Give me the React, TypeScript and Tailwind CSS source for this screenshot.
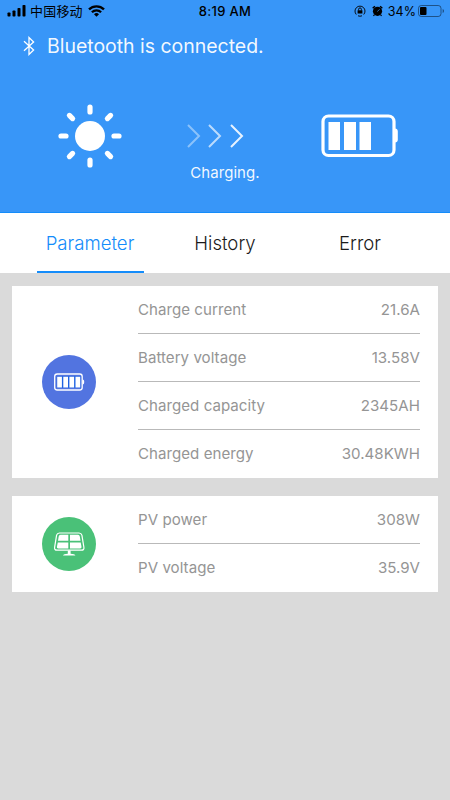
import React from "react";

type Row = { label: string; value: string };

const battery: Row[] = [
  { label: "Charge current", value: "21.6A" },
  { label: "Battery voltage", value: "13.58V" },
  { label: "Charged capacity", value: "2345AH" },
  { label: "Charged energy", value: "30.48KWH" },
];

const solar: Row[] = [
  { label: "PV power", value: "308W" },
  { label: "PV voltage", value: "35.9V" },
];

function StatusBar() {
  return (
    <div className="grid h-[22px] grid-cols-3 items-center pl-[7px] pr-[5px] text-black">
      <div className="flex items-center">
        <svg width="19" height="12" viewBox="0 0 19 12" fill="currentColor">
          <rect x="0.5" y="7.5" width="3" height="4" rx="0.8" />
          <rect x="5.5" y="5.5" width="3" height="6" rx="0.8" />
          <rect x="10.5" y="3" width="3" height="8.5" rx="0.8" />
          <rect x="15.5" y="0" width="3" height="11.5" rx="0.8" />
        </svg>
        <span className="ml-[4px] whitespace-nowrap font-['Noto_Sans_CJK_SC',sans-serif] text-[13px] font-normal leading-[20px] tracking-[0.2px]">中国移动</span>
        <svg className="ml-[5px]" width="17" height="12" viewBox="0 0 17 12" fill="none" stroke="currentColor" strokeWidth="2.3">
          <path d="M1 4.4a10.6 10.6 0 0 1 15 0" />
          <path d="M3.9 7.2a6.6 6.6 0 0 1 9.2 0" />
          <path d="M8.5 11.8 6 9.2a3.6 3.6 0 0 1 5 0z" fill="currentColor" stroke="none" />
        </svg>
      </div>
      <div className="pr-[2px] text-center text-[13px] font-medium leading-[20px] tracking-[0.3px]">8:19 AM</div>
      <div className="flex items-center justify-end">
        <svg width="12" height="12" viewBox="0 0 12 12" fill="none" stroke="currentColor">
          <path d="M2.3 9.5A5 5 0 1 1 9.7 9.5M4 10.8a5 5 0 0 0 4 0" strokeWidth=".9" />
          <rect x="3.6" y="5.3" width="4.8" height="3.2" fill="currentColor" stroke="none" />
          <path d="M4.6 5.5V4.3a1.4 1.4 0 0 1 2.8 0v1.2" strokeWidth=".9" />
        </svg>
        <svg className="ml-[6px]" width="11" height="12" viewBox="0 0 11 12">
          <circle cx="5.5" cy="6.3" r="4.6" />
          <path d="M.7 3.3 2.9 1.2M10.3 3.3 8.1 1.2" stroke="#000" strokeWidth="1.5" />
          <path d="M2.3 9.8 1.5 11M8.7 9.8l.8 1.2" stroke="#000" strokeWidth="1.2" />
          <path d="M5.3 6.5 7.7 4.3" stroke="#3896f8" strokeWidth=".7" />
        </svg>
        <span className="ml-[5px] pt-[1px] text-[12.5px] leading-[20px] tracking-[0.05px]">34%</span>
        <svg className="ml-[2px]" width="27" height="12" viewBox="0 0 27 12">
          <rect x=".5" y=".5" width="22.5" height="11" rx="2.8" fill="none" stroke="#000" strokeOpacity=".45" />
          <rect x="2" y="2" width="6.5" height="8" rx="1" />
          <path d="M24.7 4v4a2.2 2.2 0 0 0 0-4" fillOpacity=".5" />
        </svg>
      </div>
    </div>
  );
}

function Header() {
  return (
    <header className="flex h-[213px] flex-col border-b border-[#148cfa] bg-[#3896f8] text-white">
      <StatusBar />
      <div className="flex h-[48px] items-center pl-[23px]">
        <svg width="12" height="20" viewBox="0 0 12 20" fill="none" stroke="currentColor" strokeWidth="1.3">
          <path d="M1 5.3 10.6 14 6 18.4V1.6l4.6 4.4L1 14.7" />
        </svg>
        <h1 className="ml-[12px] text-[19.5px] font-normal leading-[24px] tracking-[-0.03px] text-white/95">Bluetooth is connected.</h1>
      </div>
      <div className="flex pl-[57px]">
        <svg className="mt-[33px]" width="66" height="66" viewBox="-33 -33 66 66">
          <circle r="15" fill="#fff" />
          <path
            d="M0-29v5M0 24v5M-29 0h5M24 0h5M-20.6-20.6l3.2 3.2M20.6-20.6l-3.2 3.2M-20.6 20.6l3.2-3.2M20.6 20.6l-3.2-3.2"
            stroke="#fff"
            strokeWidth="5.2"
            strokeLinecap="round"
          />
        </svg>
        <div className="ml-[62px] flex w-[80px] flex-col items-center">
          <svg className="mt-[54px] mr-[21px]" width="58" height="24" viewBox="0 0 58 24" fill="none" stroke="#fff" strokeWidth="2">
            <path d="M2 1l11 11L2 23" opacity=".42" />
            <path d="M23 1l11 11-11 11" opacity=".66" />
            <path d="M45 1l11 11-11 11" opacity=".88" />
          </svg>
          <p className="mt-[15px] text-[15px] font-normal leading-[20px] tracking-[0.05px] text-white/95">Charging.</p>
        </div>
        <svg className="ml-[55px] mt-[43px]" width="78" height="46" viewBox="0 0 78 46" fill="none">
          <rect x="3" y="3" width="71" height="39.5" rx="5.5" stroke="#fff" strokeWidth="3.2" />
          <path d="M8.5 9H20v28H8.500zM24 9h12v28H24zM39.500 9H51v28H39.500z" fill="#fff" />
          <path d="M75 15.500c1.800 0 2.800 1 2.800 3v8c0 2-1 3-2.800 3z" fill="#fff" />
        </svg>
      </div>
    </header>
  );
}

function Tabs() {
  return (
    <nav className="flex h-[60px] justify-center bg-white text-[18.6px] font-light leading-[24px] text-[#1b1b1b]">
      <div className="flex w-[135px] justify-center">
        <button className="flex w-[107px] justify-center border-b-2 border-[#148cfa] pt-[18px] text-[#148cfa]">Parameter</button>
      </div>
      <button className="flex w-[135px] justify-center pt-[18px]">History</button>
      <button className="flex w-[135px] justify-center pt-[18px]">Error</button>
    </nav>
  );
}

function Card({ rows, children }: { rows: Row[]; children: React.ReactNode }) {
  return (
    <section className="flex items-center bg-white pr-[18px]">
      <div className="flex w-[126px] justify-start pl-[30px]">{children}</div>
      <dl className="flex-1">
        {rows.map((r) => (
          <div
            key={r.label}
            className="flex h-[48px] items-center justify-between border-b border-[#b9b9b9] pt-[1.5px] text-[15.1px] font-normal leading-[20px] tracking-[0.03px] text-[#959595] last:border-transparent"
          >
            <dt>{r.label}</dt>
            <dd>{r.value}</dd>
          </div>
        ))}
      </dl>
    </section>
  );
}

function BatteryBadge() {
  return (
    <svg width="54" height="54" viewBox="0 0 54 54">
      <circle cx="27" cy="27" r="27" fill="#5274e0" />
      <rect x="12.7" y="19" width="27.5" height="16" rx="2.5" fill="none" stroke="#fff" strokeWidth="1.3" />
      <path d="M14.8 21.2h23.8v11.6H14.8z" fill="#1f63e2" />
      <path d="M15.2 21.7h4.7v10.8h-4.7zM21.3 21.7h4.7v10.8h-4.7zM27.4 21.7h4.7v10.8h-4.7zM33.5 21.7h4.7v10.8h-4.7z" fill="#fff" />
      <path d="M40.5 24.5c1.4 0 1.7 1 1.7 2.5s-.3 2.5-1.7 2.5z" fill="#fff" />
    </svg>
  );
}

function SolarBadge() {
  return (
    <svg width="54" height="54" viewBox="0 0 54 54">
      <circle cx="27" cy="27" r="27" fill="#4ac178" />
      <path d="M17.5 16H37q2.300 0 2.900 2.200l2 12.200q.4 2.800-2.400 2.800H15q-2.800 0-2.400-2.800l2-12.200q.6-2.200 2.900-2.200z" fill="none" stroke="#fff" strokeWidth="1.2" />
      <path d="M18.5 17.8h7.8v6H16l.7-4.300q.3-1.700 1.800-1.700zM28 17.800h8q1.500 0 1.800 1.700l.7 4.300H28zM15.800 25.400h10.500v6h-10q-1.700 0-1.400-1.700zM28 25.400h10.700l.8 4.300q.3 1.700-1.400 1.700H28z" fill="#fff" />
      <path d="M25.800 33.500h2.800v3.200q4.200.2 4.800 1.800H21q.6-1.600 4.800-1.800z" fill="#fff" />
    </svg>
  );
}

export default function App() {
  return (
    <div className="flex min-h-[800px] w-[450px] flex-col bg-[#dadada] font-['Inter','Liberation_Sans',sans-serif]">
      <Header />
      <Tabs />
      <main className="flex flex-col gap-[18px] px-[12px] pt-[12.5px]">
        <Card rows={battery}>
          <BatteryBadge />
        </Card>
        <Card rows={solar}>
          <SolarBadge />
        </Card>
      </main>
    </div>
  );
}
